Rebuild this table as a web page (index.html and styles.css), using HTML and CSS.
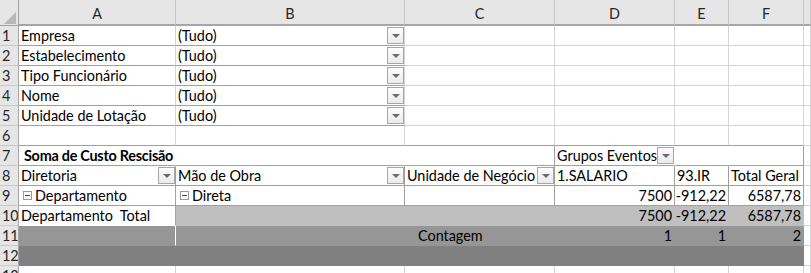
FILE: index.html
```html
<!DOCTYPE html>
<html lang="pt">
<head>
<meta charset="utf-8">
<title>Tabela dinâmica</title>
<link rel="stylesheet" href="styles.css">
</head>
<body>
<div class="sheet">
  <div class="corner"><span class="tri"></span></div>
  <div class="ch">A</div><div class="ch">B</div><div class="ch">C</div><div class="ch">D</div><div class="ch">E</div><div class="ch">F</div><div class="ch"></div>

  <div class="rh">1</div><div class="c pb">Empresa</div><div class="c pb"><span class="t">(Tudo)</span><span class="dd"></span></div><div class="c"></div><div class="c"></div><div class="c"></div><div class="c"></div><div class="c"></div>
  <div class="rh">2</div><div class="c pb">Estabelecimento</div><div class="c pb"><span class="t">(Tudo)</span><span class="dd"></span></div><div class="c"></div><div class="c"></div><div class="c"></div><div class="c"></div><div class="c"></div>
  <div class="rh">3</div><div class="c pb">Tipo Funcionário</div><div class="c pb"><span class="t">(Tudo)</span><span class="dd"></span></div><div class="c"></div><div class="c"></div><div class="c"></div><div class="c"></div><div class="c"></div>
  <div class="rh">4</div><div class="c pb">Nome</div><div class="c pb"><span class="t">(Tudo)</span><span class="dd"></span></div><div class="c"></div><div class="c"></div><div class="c"></div><div class="c"></div><div class="c"></div>
  <div class="rh">5</div><div class="c pb">Unidade de Lotação</div><div class="c pb"><span class="t">(Tudo)</span><span class="dd"></span></div><div class="c"></div><div class="c"></div><div class="c"></div><div class="c"></div><div class="c"></div>
  <div class="rh">6</div><div class="c pb"></div><div class="c pb"></div><div class="c pb"></div><div class="c pb"></div><div class="c pb"></div><div class="c pb"></div><div class="c"></div>

  <div class="rh">7</div><div class="c pb nr b">Soma de Custo Rescisão</div><div class="c pb nr"></div><div class="c pb pr"></div><div class="c pb nr"><span class="t">Grupos Eventos</span><span class="dd"></span></div><div class="c pb nr"></div><div class="c pb pr"></div><div class="c"></div>
  <div class="rh">8</div><div class="c pb pr"><span class="t">Diretoria</span><span class="dd"></span></div><div class="c pb pr"><span class="t">Mão de Obra</span><span class="dd"></span></div><div class="c pb pr"><span class="t">Unidade de Negócio</span><span class="dd"></span></div><div class="c pb pr">1.SALARIO</div><div class="c pb pr">93.IR</div><div class="c pb pr">Total Geral</div><div class="c"></div>
  <div class="rh">9</div><div class="c pb pr"><span class="mb"></span>Departamento</div><div class="c pb pr"><span class="mb"></span>Direta</div><div class="c pb pr"></div><div class="c pb pr num">7500</div><div class="c pb pr num">-912,22</div><div class="c pb pr num">6587,78</div><div class="c"></div>
  <div class="rh">10</div><div class="c pr nb">Departamento&nbsp; Total</div><div class="c g1"></div><div class="c g1"></div><div class="c g1 num">7500</div><div class="c g1 num">-912,22</div><div class="c g1 num">6587,78</div><div class="c"></div>
  <div class="rh">11</div><div class="c g2 wr"></div><div class="c g2"></div><div class="c g2 cnt">Contagem</div><div class="c g2 num">1</div><div class="c g2 num">1</div><div class="c g2 num">2</div><div class="c"></div>
  <div class="rh">12</div><div class="c g3"></div><div class="c g3"></div><div class="c g3"></div><div class="c g3"></div><div class="c g3"></div><div class="c g3"></div><div class="c"></div>
  <div class="rh">13</div><div class="c"></div><div class="c"></div><div class="c"></div><div class="c"></div><div class="c"></div><div class="c"></div><div class="c"></div>
</div>
</body>
</html>
```

FILE: styles.css
```css
html, body {
  margin: 0;
  padding: 0;
  background: #ffffff;
  overflow: hidden;
}

.sheet {
  display: grid;
  grid-template-columns: 19px 157px 229px 150px 120px 54px 75px 1fr;
  grid-template-rows: 26px;
  grid-auto-rows: 20px;
  width: 811px;
  font-family: "Lato", "Liberation Sans", sans-serif;
  font-size: 14.4px;
  color: #000;
}

.sheet > div {
  box-sizing: border-box;
  border-right: 1px solid #d4d4d4;
  border-bottom: 1px solid #d4d4d4;
  min-width: 0;
  overflow: hidden;
  white-space: nowrap;
}

.corner {
  background: #e6e6e6;
  position: relative;
  border-bottom-color: #a0a0a0 !important;
  border-right-color: #a0a0a0 !important;
}

.tri {
  position: absolute;
  right: 2px;
  bottom: 1px;
  width: 0;
  height: 0;
  border-left: 12px solid transparent;
  border-bottom: 12px solid #b7b7b7;
}

.ch {
  background: #e6e6e6;
  border-bottom: 2px solid #a6a6a6 !important;
  border-right-color: #c8c8c8 !important;
  display: flex;
  align-items: center;
  justify-content: center;
  color: #262626;
  padding-top: 2px;
}

.rh {
  background: #e6e6e6;
  border-right-color: #a6a6a6 !important;
  border-bottom-color: #c8c8c8 !important;
  color: #262626;
  padding-left: 2px;
  line-height: 19px;
}

.c {
  display: flex;
  align-items: center;
  padding-left: 2px;
  line-height: 19px;
}

.t {
  flex: 1;
  overflow: hidden;
}

.pb { border-bottom-color: #a0a0a0 !important; }
.pr { border-right-color: #a0a0a0 !important; }
.nr { border-right-color: #ffffff !important; }
.nb { border-bottom-color: #ffffff !important; }

.sheet > .b {
  font-weight: 700;
  padding-left: 5px;
  letter-spacing: -0.25px;
  overflow: visible;
  position: relative;
  z-index: 1;
}

.num {
  justify-content: flex-end;
  padding-right: 2px;
}

.g1 { background: #bfbfbf; border-color: #bfbfbf !important; }
.g2 { background: #969696; border-color: #969696 !important; }
.g3 { background: #808080; border-color: #808080 !important; }
.wr { border-right-color: #ffffff !important; }

.cnt { padding-left: 13px; }

.dd {
  flex: none;
  box-sizing: border-box;
  width: 17px;
  height: 17px;
  border: 1px solid #a6a6a6;
  background: linear-gradient(#fdfdfd, #ebebeb);
  display: flex;
  align-items: center;
  justify-content: center;
}

.dd::after {
  content: "";
  width: 0;
  height: 0;
  border-left: 4px solid transparent;
  border-right: 4px solid transparent;
  border-top: 4px solid #6b6b6b;
  margin-top: 1px;
}

.mb {
  flex: none;
  box-sizing: border-box;
  width: 9px;
  height: 9px;
  border: 1px solid #9a9a9a;
  margin: 0 3px 0 2px;
  display: flex;
  align-items: center;
  justify-content: center;
}

.mb::after {
  content: "";
  width: 5px;
  height: 1px;
  background: #404040;
}
```
